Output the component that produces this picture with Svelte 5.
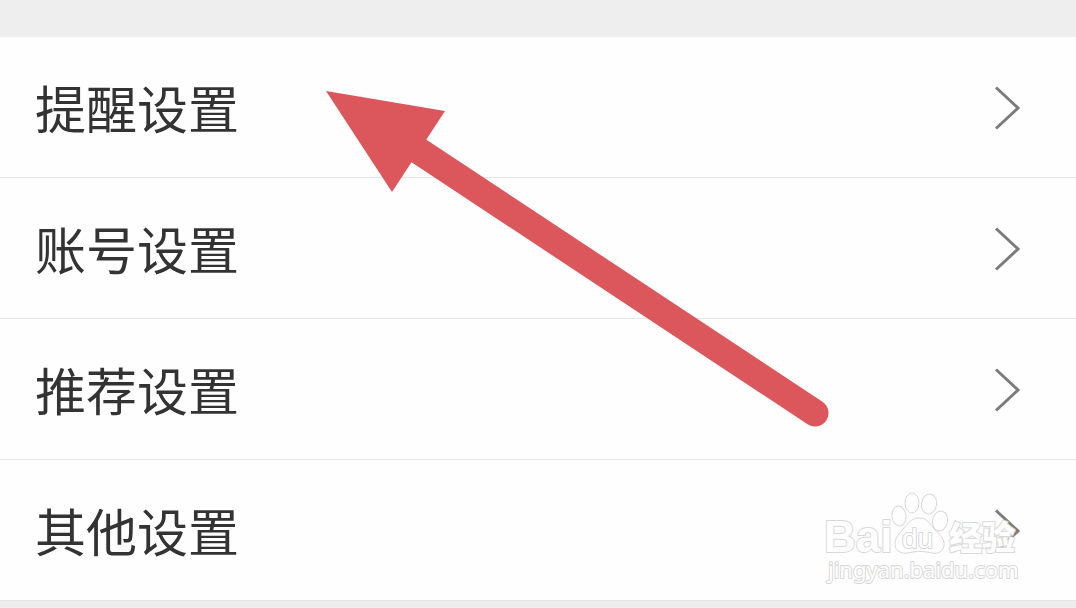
<script>
  const items = ['提醒设置', '账号设置', '推荐设置', '其他设置'];
</script>

<main>
  <nav aria-label="设置">
    <ul>
      {#each items as item}
        <li>
          <a href="#settings">
            <span>{item}</span>
            <svg class="chevron" viewBox="0 0 28 48" aria-hidden="true">
              <path d="M3 4.5 25 25 3 45.5" />
            </svg>
          </a>
        </li>
      {/each}
    </ul>
  </nav>

  <svg class="arrow" viewBox="0 0 504 338" aria-hidden="true">
    <path class="shaft" d="M90 58 489 322" />
    <path class="head" d="M0 0 119 20 66 101Z" />
  </svg>

  <svg class="watermark" viewBox="0 0 210 100" role="img" aria-label="Baidu 经验">
    <g class="outline">
      <text class="brand" x="6" y="60">Bai</text>
      <path d="M101 26C94 26 90 31 86 36C82 41 77 45 77 52C77 59 83 62 90 61C98 59 106 59 114 61C122 63 127 57 126 50C124 43 118 40 114 34C110 29 107 26 101 26Z" />
      <ellipse cx="81" cy="24" rx="7" ry="10" transform="rotate(-8 81 24)" />
      <ellipse cx="94" cy="11" rx="7" ry="10" />
      <ellipse cx="111" cy="12" rx="7.5" ry="10" transform="rotate(10 111 12)" />
      <ellipse cx="122" cy="29" rx="7.5" ry="10" transform="rotate(12 122 29)" />
      <text class="du" x="84" y="56">du</text>
      <text class="word" x="131" y="58">经验</text>
      <text class="site" x="10" y="86">jingyan.baidu.com</text>
    </g>
  </svg>
</main>

<style>
  :global(body) {
    margin: 0;
    background: #eee;
  }

  main {
    position: relative;
    box-sizing: border-box;
    min-height: 100vh;
    padding: 37px 0 7px;
    overflow: hidden;
    background: #eee;
    font-family: "Noto Sans CJK SC", sans-serif;
  }

  ul {
    margin: 0;
    padding: 0;
    list-style: none;
    background: #fefefe;
  }

  li {
    border-bottom: 1px solid #e6e6e6;
  }

  a {
    display: flex;
    align-items: center;
    justify-content: space-between;
    padding: 34px 55px 34px 35px;
    color: #333;
    font-size: 51px;
    line-height: 72px;
    text-decoration: none;
  }

  .chevron {
    width: 28px;
    height: 48px;
    fill: none;
    stroke: #7c7c7c;
    stroke-width: 3;
  }

  .arrow {
    position: absolute;
    top: 91px;
    left: 326px;
    width: 504px;
    height: 338px;
    pointer-events: none;
  }

  .shaft {
    fill: none;
    stroke: #db575c;
    stroke-width: 27;
    stroke-linecap: round;
  }

  .head {
    fill: #db575c;
  }

  .watermark {
    position: absolute;
    right: 48px;
    bottom: 16px;
    width: 210px;
    height: 100px;
    overflow: visible;
    pointer-events: none;
  }

  .outline {
    fill: #fefefe;
    stroke: #d8d8d8;
    stroke-width: 1;
  }

  .outline text {
    stroke-width: 2;
    stroke-linejoin: round;
    paint-order: stroke;
  }

  .brand {
    font: bold 44px "Liberation Sans", sans-serif;
  }

  .du {
    font: 28px "Liberation Sans", sans-serif;
  }

  .word {
    font: 900 33px "Noto Sans CJK SC", sans-serif;
  }

  .site {
    font: 22px "Noto Sans", sans-serif;
  }
</style>
